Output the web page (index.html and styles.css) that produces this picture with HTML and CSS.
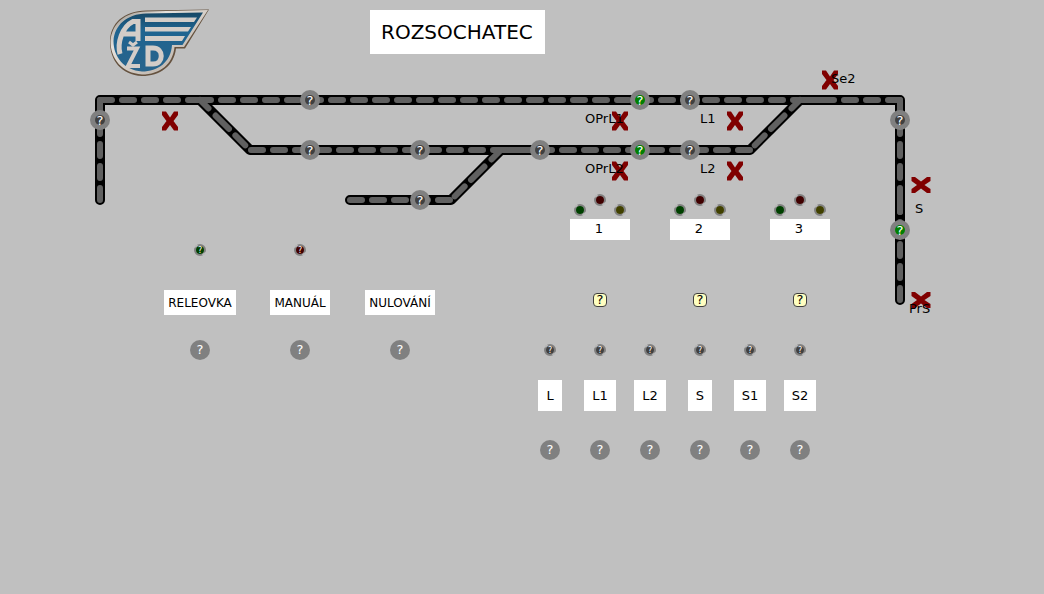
FILE: index.html
```html
<!DOCTYPE html>
<html lang="cs">
<head>
<meta charset="utf-8">
<title>Rozsochatec</title>
<link rel="stylesheet" href="styles.css">
</head>
<body>
<main class="panel">
  <svg class="plan" width="940" height="320" aria-label="Kolejový plán">
    <defs>
      <linearGradient id="metal" x1="0" y1="0" x2="1" y2="1"><stop offset="0" stop-color="#8d8982"/><stop offset=".3" stop-color="#e6e2dd"/><stop offset=".7" stop-color="#c4bcb4"/><stop offset="1" stop-color="#efece8"/></linearGradient>
      <linearGradient id="enamel" x1="0" y1="0" x2="0" y2="1"><stop offset="0" stop-color="#174866"/><stop offset=".3" stop-color="#1f6490"/><stop offset="1" stop-color="#28648c"/></linearGradient>
      <g id="sensor"><circle r="10" fill="#808080"/><circle r="5" fill="#404040"/><text class="q" y="5">?</text></g>
      <g id="sensor-on"><circle r="10" fill="#808080"/><circle r="5" fill="#008000"/><text class="q" y="5">?</text></g>
      <path id="fault" fill="#800000" d="M-8 -9.500H-4L0 -3.500L4 -9.500H8V-6L3.500 0L8 6V9.500H4L0 4L-4 9.500H-8V6L-3.500 0L-8 -6Z"/>
    </defs>

    <g class="logo">
      <path d="M110 42C110 23 124 11 146 10.500L209 9.500L185 48.500H176C174 66 160 76 142 76C121 75 110 60 110 42Z" fill="#65523f"/>
      <path d="M110.500 41C112 23 125 12 146 11.500L208 10L184 47H174.500C173 64 160 74.500 142 74.500C122 73 110.500 59 110.500 41Z" fill="url(#metal)"/>
      <path d="M113.500 41C114.500 25 127 14 146 13.500L203 12.500L182.500 45H172C171 62 158 71.500 142 71.500C124 70 113.500 57 113.500 41Z" fill="url(#enamel)"/>
      <path d="M145 17.500H197L194 22H145ZM145 27H191L188 31.500H145ZM145 36H185L182 41H145Z" fill="#d3cdc8"/>
      <g fill="none" stroke="#d3cdc8" stroke-width="5">
        <path d="M120 54C117 43 122 27 133 21.500H138V41M122 34H138"/>
        <path d="M127 48.500H137L128 66H140" stroke-width="4"/>
        <path d="M129 42L133 45L137 42" stroke-width="3"/>
        <path d="M148 48H153C164 48 164 64 153 64H148Z"/>
      </g>
    </g>

    <g class="bed">
      <path d="M100 200V100H900V300"/>
      <path d="M200 100L250 150H750L800 100"/>
      <path d="M350 200H451L500 151"/>
    </g>
    <g class="rail">
      <path d="M100 200V100"/>
      <path d="M100 100H200"/>
      <path d="M199 100H800"/>
      <path d="M900 100H800"/>
      <path d="M900 100V200"/>
      <path d="M900 300V200"/>
      <path d="M251 150H500"/>
      <path d="M750 150H500"/>
      <path d="M350 200H451"/>
      <path class="solid" d="M808 100H832M509 150H534M900 189V212"/>
      <path class="branch" d="M200 100L250 150"/>
      <path class="branch" d="M500 151L451 200"/>
      <path class="branch" d="M800 100L750 150"/>
    </g>

    <use href="#fault" x="170" y="121"/>
    <use href="#fault" x="620" y="121"/>
    <use href="#fault" x="735" y="121"/>
    <use href="#fault" x="620" y="171"/>
    <use href="#fault" x="735" y="171"/>
    <use href="#fault" x="830" y="80"/>
    <use href="#fault" transform="translate(921 185) rotate(90)"/>
    <use href="#fault" transform="translate(921 300) rotate(90)"/>

    <g class="names">
      <text x="585" y="123">OPrL1</text>
      <text x="585" y="173">OPrL2</text>
      <text x="700" y="123">L1</text>
      <text x="700" y="173">L2</text>
      <text x="915" y="213">S</text>
      <text x="831" y="83">Se2</text>
      <text x="909" y="313">PrS</text>
    </g>

    <use href="#sensor" x="100" y="120"/>
    <use href="#sensor" x="310" y="100"/>
    <use href="#sensor" x="310" y="150"/>
    <use href="#sensor" x="420" y="150"/>
    <use href="#sensor" x="420" y="200"/>
    <use href="#sensor" x="540" y="150"/>
    <use href="#sensor-on" x="640" y="100"/>
    <use href="#sensor-on" x="640" y="150"/>
    <use href="#sensor" x="690" y="100"/>
    <use href="#sensor" x="690" y="150"/>
    <use href="#sensor" x="900" y="120"/>
    <use href="#sensor-on" x="900" y="230"/>
  </svg>

  <h1 class="station">ROZSOCHATEC</h1>

  <svg width="0" height="0" class="defs">
    <defs>
      <g id="lamp"><circle r="5" fill="none" stroke="#808080" stroke-width="2"/><path d="M-5 -2.500L-2.500 -5M5 2.500L2.500 5" stroke="#e0e0e0" stroke-width="1"/><circle r="4"/></g>
    </defs>
  </svg>

  <section class="modes">
    <div class="unit">
      <svg class="led green" viewBox="-6 -6 12 12"><use href="#lamp"/><text y="3">?</text></svg>
      <label class="tag" for="m1">RELEOVKA</label>
      <button class="knob" id="m1">?</button>
    </div>
    <div class="unit">
      <svg class="led red" viewBox="-6 -6 12 12"><use href="#lamp"/><text y="3">?</text></svg>
      <label class="tag" for="m2">MANUÁL</label>
      <button class="knob" id="m2">?</button>
    </div>
    <div class="unit">
      <span class="led"></span>
      <label class="tag" for="m3">NULOVÁNÍ</label>
      <button class="knob" id="m3">?</button>
    </div>
  </section>

  <section class="routes">
    <div class="route">
      <svg class="lamps" viewBox="0 0 60 22"><use class="green" href="#lamp" x="10" y="16"/><use class="red" href="#lamp" x="30" y="6"/><use class="yellow" href="#lamp" x="50" y="16"/></svg>
      <label class="plate" for="r1">1</label>
      <button class="light" id="r1">?</button>
    </div>
    <div class="route">
      <svg class="lamps" viewBox="0 0 60 22"><use class="green" href="#lamp" x="10" y="16"/><use class="red" href="#lamp" x="30" y="6"/><use class="yellow" href="#lamp" x="50" y="16"/></svg>
      <label class="plate" for="r2">2</label>
      <button class="light" id="r2">?</button>
    </div>
    <div class="route">
      <svg class="lamps" viewBox="0 0 60 22"><use class="green" href="#lamp" x="10" y="16"/><use class="red" href="#lamp" x="30" y="6"/><use class="yellow" href="#lamp" x="50" y="16"/></svg>
      <label class="plate" for="r3">3</label>
      <button class="light" id="r3">?</button>
    </div>
  </section>

  <section class="signals">
    <div class="unit"><svg class="led" viewBox="-6 -6 12 12"><use href="#lamp"/><text y="3">?</text></svg><label class="tag" for="s1">L</label><button class="knob" id="s1">?</button></div>
    <div class="unit"><svg class="led" viewBox="-6 -6 12 12"><use href="#lamp"/><text y="3">?</text></svg><label class="tag" for="s2">L1</label><button class="knob" id="s2">?</button></div>
    <div class="unit"><svg class="led" viewBox="-6 -6 12 12"><use href="#lamp"/><text y="3">?</text></svg><label class="tag" for="s3">L2</label><button class="knob" id="s3">?</button></div>
    <div class="unit"><svg class="led" viewBox="-6 -6 12 12"><use href="#lamp"/><text y="3">?</text></svg><label class="tag" for="s4">S</label><button class="knob" id="s4">?</button></div>
    <div class="unit"><svg class="led" viewBox="-6 -6 12 12"><use href="#lamp"/><text y="3">?</text></svg><label class="tag" for="s5">S1</label><button class="knob" id="s5">?</button></div>
    <div class="unit"><svg class="led" viewBox="-6 -6 12 12"><use href="#lamp"/><text y="3">?</text></svg><label class="tag" for="s6">S2</label><button class="knob" id="s6">?</button></div>
  </section>
</main>
</body>
</html>
```
FILE: styles.css
```css
* { box-sizing: border-box; }

body {
  margin: 0;
  background: #c0c0c0;
  color: #000;
  font: 13px/15px "DejaVu Sans", sans-serif;
}

.panel { position: relative; min-height: 100vh; }
.plan { display: block; }
.defs { position: absolute; }

.bed path { fill: none; stroke: #000; stroke-width: 10; stroke-linecap: round; stroke-linejoin: round; }
.rail path { fill: none; stroke: #606060; stroke-width: 6; stroke-linecap: round; stroke-dasharray: 12 10; }
.rail .solid { stroke-dasharray: none; }
.rail .branch { stroke-dasharray: 12 10 19 9 14 90; }
.q { fill: #fff; font-size: 13px; text-anchor: middle; }

.station {
  position: absolute;
  left: 370px;
  top: 10px;
  margin: 0;
  padding: 10px 12px 10px 11px;
  background: #fff;
  font-size: 20px;
  font-weight: normal;
  line-height: 24px;
}

.modes, .signals, .routes { position: absolute; display: flex; }
.modes { left: 150px; top: 244px; }
.signals { left: 525px; top: 344px; }
.routes { left: 570px; top: 194px; gap: 40px; }

.unit { display: flex; flex-direction: column; align-items: center; }
.modes .unit { width: 100px; }
.signals .unit { width: 50px; }
.route { display: flex; flex-direction: column; align-items: center; width: 60px; }

.led { display: block; width: 12px; height: 12px; fill: #404040; }
.led text { fill: #fff; font-size: 8px; text-anchor: middle; }
.lamps { display: block; width: 60px; height: 22px; }
.green { fill: #004000; }
.red { fill: #400000; }
.yellow { fill: #404000; }

.tag, .plate { background: #fff; text-align: center; }
.modes .tag { margin: 34px 0 25px; padding: 6px 4px 4px; font-size: 12px; }
.signals .tag { margin: 24px 0 29px; padding: 8px; }
.plate { width: 60px; margin: 3px 0 53px; padding: 2px 2px 4px 0; }

.knob, .light {
  display: flex;
  align-items: center;
  justify-content: center;
  padding: 0;
  border: 0;
  font: 13px/20px "DejaVu Sans", sans-serif;
}
.knob { width: 20px; height: 20px; border-radius: 50%; background: #808080; color: #fff; }
.light { width: 14px; height: 14px; border: 1px solid #404040; border-radius: 4px; background: #ffffc0; line-height: 12px; color: #000; }

@media (hover: hover) {
  .knob:hover, .light:hover { filter: brightness(1.1); }
}
```
